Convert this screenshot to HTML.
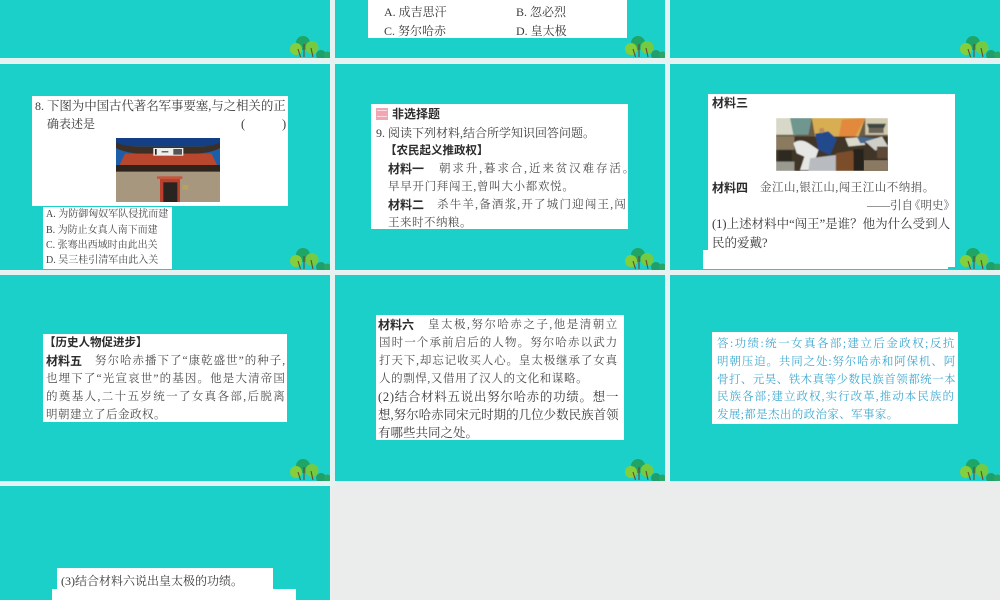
<!DOCTYPE html>
<html lang="zh-CN">
<head>
<meta charset="utf-8">
<style>
html,body{margin:0;padding:0;background:#ebecec;}
#p{position:relative;width:1000px;height:600px;overflow:hidden;background:#ebecec;filter:blur(0.35px);font-family:"Liberation Serif","Noto Serif CJK SC",serif;font-size:12.5px;color:#3a3a3a;}
.s{position:absolute;background:#1cd0ca;overflow:hidden;}
.g{position:absolute;background:#e4f3f1;}
.b{position:absolute;background:#fff;}
.l{position:absolute;line-height:16px;height:16px;white-space:nowrap;}
.m{color:#4c4c4c;font-size:11.5px;}
.h{font-family:"Liberation Sans","Noto Sans CJK SC",sans-serif;font-weight:700;color:#2c2c2c;font-size:12px;}
.k{font-size:11.5px;}
.a{color:#3fa9d0;font-size:11.5px;}
.o{font-size:10px;color:#444;}
.x{font-size:12px;}
.t{position:absolute;width:40px;height:24px;}
svg{display:block;}
</style>
</head>
<body>
<div id="p">
<svg width="0" height="0" style="position:absolute">
<defs>
<symbol id="tree" viewBox="0 0 40 24">
<circle cx="13" cy="9" r="7" fill="#1fa566"/>
<circle cx="6" cy="15" r="6" fill="#86cf3c"/>
<circle cx="22" cy="13.500" r="6.500" fill="#74cb42"/>
<circle cx="31" cy="21" r="5" fill="#1f9f6a"/>
<circle cx="37.500" cy="21" r="3.500" fill="#2aa765"/>
<path d="M8 15L10.500 23M14 10V23M21 14L23 23" stroke="#6b4a2a" stroke-width="1.100" fill="none"/>
</symbol>
<filter id="bl"><feGaussianBlur stdDeviation="1.200"/></filter>
</defs>
</svg>

<!-- slides -->
<div class="s" style="left:0;top:0;width:330px;height:58px"><svg class="t" style="left:290px;top:34px"><use href="#tree"/></svg></div>
<div class="s" style="left:335px;top:0;width:330px;height:58px"><svg class="t" style="left:290px;top:34px"><use href="#tree"/></svg></div>
<div class="s" style="left:670px;top:0;width:330px;height:58px"><svg class="t" style="left:290px;top:34px"><use href="#tree"/></svg></div>
<div class="s" style="left:0;top:64px;width:330px;height:206px"><svg class="t" style="left:290px;top:182px"><use href="#tree"/></svg></div>
<div class="s" style="left:335px;top:64px;width:330px;height:206px"><svg class="t" style="left:290px;top:182px"><use href="#tree"/></svg></div>
<div class="s" style="left:670px;top:64px;width:330px;height:206px"><svg class="t" style="left:290px;top:182px"><use href="#tree"/></svg></div>
<div class="s" style="left:0;top:275px;width:330px;height:206px"><svg class="t" style="left:290px;top:182px"><use href="#tree"/></svg></div>
<div class="s" style="left:335px;top:275px;width:330px;height:206px"><svg class="t" style="left:290px;top:182px"><use href="#tree"/></svg></div>
<div class="s" style="left:670px;top:275px;width:330px;height:206px"><svg class="t" style="left:290px;top:182px"><use href="#tree"/></svg></div>
<div class="s" style="left:0;top:486px;width:330px;height:114px"></div>

<!-- gutters -->
<div class="g" style="left:0;top:58px;width:1000px;height:6px"></div>
<div class="g" style="left:0;top:270px;width:1000px;height:5px"></div>
<div class="g" style="left:0;top:481px;width:330px;height:5px"></div>
<div class="g" style="left:330px;top:0;width:5px;height:486px"></div>
<div class="g" style="left:665px;top:0;width:5px;height:481px"></div>

<!-- row 1 col 2 -->
<div class="b" style="left:368px;top:0;width:259px;height:38px"></div>
<div class="l x" style="left:384px;top:4px">A. 成吉思汗</div>
<div class="l x" style="left:516px;top:4px">B. 忽必烈</div>
<div class="l x" style="left:384px;top:23px">C. 努尔哈赤</div>
<div class="l x" style="left:516px;top:23px">D. 皇太极</div>

<!-- question 8 -->
<div class="b" style="left:32px;top:96px;width:256px;height:110px"></div>
<div class="l x" style="left:35px;top:98px">8.</div>
<div class="l" style="left:47px;top:98px;letter-spacing:-0.1px">下图为中国古代著名军事要塞,与之相关的正</div>
<div class="l x" style="left:47px;top:116px">确表述是</div>
<div class="l" style="left:241px;top:116px">(</div>
<div class="l" style="left:282px;top:116px">)</div>
<svg style="position:absolute;left:116px;top:138px" width="104" height="64" viewBox="33 25 312 192" preserveAspectRatio="none">
<rect x="33" y="25" width="312" height="192" fill="#1c5ea8"/>
<rect x="33" y="25" width="312" height="24" fill="#123f86"/>
<path d="M33 38Q60 52 110 50H270Q320 52 345 38V55Q320 70 270 72H110Q60 70 33 55Z" fill="#3c3026"/>
<path d="M60 72H320L337 108H43Z" fill="#b9472e"/>
<rect x="33" y="106" width="312" height="20" fill="#2f241c"/>
<rect x="33" y="126" width="312" height="91" fill="#a7977f"/>
<rect x="145" y="55" width="90" height="23" fill="#eeeeea"/>
<rect x="170" y="65" width="20" height="3" fill="#222"/>
<rect x="150" y="58" width="5" height="17" fill="#222"/>
<rect x="205" y="58" width="26" height="17" fill="#555"/>
<rect x="156" y="140" width="76" height="8" fill="#c8563a"/>
<rect x="165" y="148" width="60" height="69" fill="#b8402c"/>
<rect x="175" y="158" width="42" height="59" fill="#2a2420"/>
<rect x="232" y="166" width="18" height="14" fill="#b5a35e"/>
</svg>
<div class="b" style="left:43px;top:207px;width:129px;height:62px"></div>
<div class="l o" style="left:46px;top:207px">A. 为防御匈奴军队侵扰而建</div>
<div class="l o" style="left:46px;top:223px">B. 为防止女真人南下而建</div>
<div class="l o" style="left:46px;top:238px">C. 张骞出西域时由此出关</div>
<div class="l o" style="left:46px;top:253px">D. 吴三桂引清军由此入关</div>

<!-- question 9 -->
<div class="b" style="left:371px;top:104px;width:257px;height:125px"></div>
<div style="position:absolute;left:376px;top:108px;width:12px;height:12px;background:#f2a6b4"></div>
<div style="position:absolute;left:377px;top:110px;width:10px;height:1px;background:#fbdde2"></div>
<div style="position:absolute;left:377px;top:116px;width:10px;height:1px;background:#fbdde2"></div>
<div class="l h" style="left:392px;top:106px">非选择题</div>
<div class="l x" style="left:376px;top:125px">9.</div>
<div class="l x" style="left:388px;top:125px">阅读下列材料,结合所学知识回答问题。</div>
<div class="l h k" style="left:385px;top:143px">【农民起义推政权】</div>
<div class="l h" style="left:388px;top:161px">材料一</div>
<div class="l m" style="left:439px;top:161px;letter-spacing:1.9px">朝求升,暮求合,近来贫汉难存活。</div>
<div class="l m" style="left:388px;top:179px;letter-spacing:0.7px">早早开门拜闯王,曾叫大小都欢悦。</div>
<div class="l h" style="left:388px;top:197px">材料二</div>
<div class="l m" style="left:437px;top:197px;letter-spacing:1.2px">杀牛羊,备酒浆,开了城门迎闯王,闯</div>
<div class="l m" style="left:388px;top:215px;letter-spacing:0.5px">王来时不纳粮。</div>

<!-- col 3 row 2 -->
<div class="b" style="left:708px;top:94px;width:247px;height:173px"></div>
<div class="b" style="left:703px;top:250px;width:245px;height:19px"></div>
<div class="l h" style="left:712px;top:95px">材料三</div>
<svg style="position:absolute;left:776px;top:118px" width="112" height="53" viewBox="33 25 335 158" preserveAspectRatio="none">
<defs><clipPath id="c"><rect x="33" y="25" width="335" height="158"/></clipPath></defs>
<g clip-path="url(#c)"><g filter="url(#bl)">
<rect x="33" y="25" width="335" height="158" fill="#6b5c46"/>
<rect x="33" y="25" width="60" height="50" fill="#d8d8c8"/>
<path d="M75 25H140L130 75H85Z" fill="#6f9690"/>
<path d="M140 25H300L280 80H150Z" fill="#d8ae52"/>
<path d="M230 30L300 25L270 80L220 85Z" fill="#e2893e"/>
<rect x="300" y="25" width="68" height="50" fill="#cfc9ae"/>
<path d="M305 42H362L356 55H310Z" fill="#3d4642"/>
<rect x="310" y="55" width="45" height="15" fill="#6b6458"/>
<rect x="33" y="80" width="335" height="103" fill="#3f3428"/>
<rect x="33" y="80" width="55" height="40" fill="#8a7a5e"/>
<rect x="40" y="120" width="40" height="35" fill="#2e2a24"/>
<rect x="33" y="155" width="55" height="28" fill="#9a9a90"/>
<path d="M85 100Q105 85 130 100L160 120L150 150L130 180H105L118 140L95 130Z" fill="#e6e6e4"/>
<path d="M150 72L190 65L215 88L195 135L160 120Z" fill="#224a8c"/>
<circle cx="170" cy="62" r="8" fill="#b78a5e"/>
<path d="M135 145L215 135L215 183H130Z" fill="#b8bcc0"/>
<path d="M212 130L262 122L285 183H212Z" fill="#7c4d2b"/>
<path d="M240 85L290 82L300 105L250 110Z" fill="#dbd8cc"/>
<path d="M275 80L335 85L330 100L285 100Z" fill="#486a90"/>
<path d="M300 95L350 80L368 110L330 122Z" fill="#cfcfc8"/>
<rect x="265" y="118" width="30" height="65" fill="#26221c"/>
<rect x="335" y="110" width="33" height="35" fill="#5c4a38"/>
</g>
<rect x="296" y="151" width="72" height="32" fill="#8a7a64"/></g>
</svg>
<div class="l h" style="left:712px;top:180px">材料四</div>
<div class="l m" style="left:760px;top:180px;letter-spacing:0.5px">金江山,银江山,闯王江山不纳捐。</div>
<div class="l m" style="left:867px;top:198px">——引自<span style="margin-left:-4px">《</span>明史》</div>
<div class="l" style="left:712px;top:216px">(1)上述材料中“闯王”是谁？他为什么受到人</div>
<div class="l" style="left:712px;top:235px">民的爱戴?</div>

<!-- col 1 row 3 -->
<div class="b" style="left:43px;top:334px;width:244px;height:88px"></div>
<div class="l h k" style="left:44px;top:335px">【历史人物促进步】</div>
<div class="l h" style="left:46px;top:353px">材料五</div>
<div class="l m" style="left:95px;top:353px;letter-spacing:1px">努尔哈赤播下了“康乾盛世”的种子,</div>
<div class="l m" style="left:46px;top:371px;letter-spacing:1.14px">也埋下了“光宣哀世”的基因。他是大清帝国</div>
<div class="l m" style="left:46px;top:389px;letter-spacing:1.37px">的奠基人,二十五岁统一了女真各部,后脱离</div>
<div class="l m" style="left:46px;top:407px;letter-spacing:0.5px">明朝建立了后金政权。</div>

<!-- col 2 row 3 -->
<div class="b" style="left:376px;top:315px;width:248px;height:125px"></div>
<div class="l h" style="left:378px;top:317px">材料六</div>
<div class="l m" style="left:428px;top:317px;letter-spacing:1.5px">皇太极,努尔哈赤之子,他是清朝立</div>
<div class="l m" style="left:379px;top:335px;letter-spacing:1.1px">国时一个承前启后的人物。努尔哈赤以武力</div>
<div class="l m" style="left:379px;top:353px;letter-spacing:0.88px">打天下,却忘记收买人心。皇太极继承了女真</div>
<div class="l m" style="left:379px;top:371px;letter-spacing:0.6px">人的剽悍,又借用了汉人的文化和谋略。</div>
<div class="l" style="left:378px;top:389px;letter-spacing:0.7px">(2)结合材料五说出努尔哈赤的功绩。想一</div>
<div class="l" style="left:378px;top:407px">想,努尔哈赤同宋元时期的几位少数民族首领</div>
<div class="l" style="left:378px;top:425px">有哪些共同之处。</div>

<!-- col 3 row 3 -->
<div class="b" style="left:712px;top:332px;width:246px;height:92px"></div>
<div class="l a" style="left:717px;top:336px;letter-spacing:1.45px">答:功绩:统一女真各部;建立后金政权;反抗</div>
<div class="l a" style="left:717px;top:354px;letter-spacing:0.87px">明朝压迫。共同之处:努尔哈赤和阿保机、阿</div>
<div class="l a" style="left:717px;top:372px;letter-spacing:0.45px">骨打、元昊、铁木真等少数民族首领都统一本</div>
<div class="l a" style="left:717px;top:389px;letter-spacing:1.05px">民族各部;建立政权,实行改革,推动本民族的</div>
<div class="l a" style="left:717px;top:407px;letter-spacing:0.37px">发展;都是杰出的政治家、军事家。</div>

<!-- row 4 -->
<div class="b" style="left:57px;top:568px;width:216px;height:32px"></div>
<div class="b" style="left:52px;top:589px;width:244px;height:11px"></div>
<div class="l x" style="left:61px;top:573px">(3)结合材料六说出皇太极的功绩。</div>
</div>
</body>
</html>
